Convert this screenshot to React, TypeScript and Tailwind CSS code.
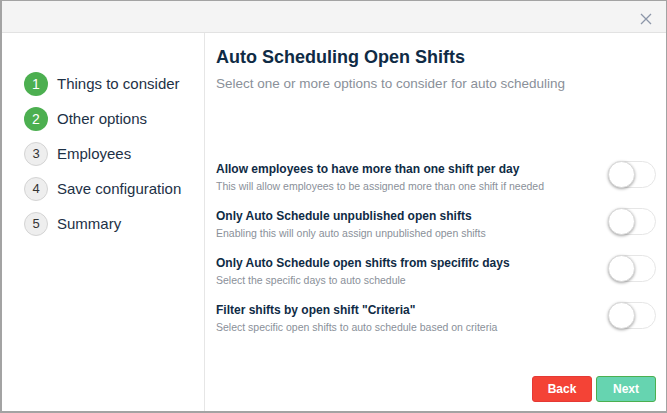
const STEPS = [
  { n: 1, label: "Things to consider", done: true },
  { n: 2, label: "Other options", done: true },
  { n: 3, label: "Employees", done: false },
  { n: 4, label: "Save configuration", done: false },
  { n: 5, label: "Summary", done: false },
];

const OPTIONS = [
  {
    title: "Allow employees to have more than one shift per day",
    desc: "This will allow employees to be assigned more than one shift if needed",
  },
  {
    title: "Only Auto Schedule unpublished open shifts",
    desc: "Enabling this will only auto assign unpublished open shifts",
  },
  {
    title: "Only Auto Schedule open shifts from specififc days",
    desc: "Select the specific days to auto schedule",
  },
  {
    title: "Filter shifts by open shift \"Criteria\"",
    desc: "Select specific open shifts to auto schedule based on criteria",
  },
];

function Toggle() {
  return (
    <div className="relative w-[48px] h-[27px] rounded-full border border-[#e6e6e6] bg-white shrink-0">
      <span className="absolute -left-px -top-px w-[27px] h-[27px] rounded-full bg-white border border-[#d9d9d9] shadow-[0_1px_3px_rgba(0,0,0,0.35)]" />
    </div>
  );
}

export default function App() {
  return (
    <div
      className="w-[667px] h-[413px] flex flex-col bg-white border border-[#a3a3a3] border-l-2 border-b-2 overflow-hidden text-[#1d3146]"
      style={{ fontFamily: '"Liberation Sans", Arial, sans-serif' }}
    >
      {/* Header */}
      <div className="h-[32px] shrink-0 bg-[#f4f4f4] border-b border-[#e2e2e2] flex items-center justify-end pr-[14px]">
        <svg width="12" height="12" viewBox="0 0 12 12" className="text-[#8c96a8] mt-[4px]">
          <path d="M1 1L11 11M11 1L1 11" stroke="currentColor" strokeWidth="1.3" />
        </svg>
      </div>

      <div className="flex flex-1 min-h-0">
        {/* Steps sidebar */}
        <div className="w-[203px] shrink-0 border-r border-[#e6e6e6] pt-[39px] pl-[22px] flex flex-col gap-[11px]">
          {STEPS.map((s) => (
            <div key={s.n} className="flex items-center h-[24px]">
              <span
                className={
                  s.done
                    ? "w-[24px] h-[24px] rounded-full bg-[#4caf50] text-white text-[14px] flex items-center justify-center"
                    : "w-[24px] h-[24px] rounded-full bg-[#eeeeee] border border-[#d4d4d4] text-[#333] text-[13px] flex items-center justify-center"
                }
              >
                {s.n}
              </span>
              <span className="ml-[9px] text-[15px] text-[#1d3146]">{s.label}</span>
            </div>
          ))}
        </div>

        {/* Content */}
        <div className="flex-1 flex flex-col pl-[11px] pr-[10px]">
          <h1 className="mt-[13px] text-[18px] font-bold text-[#0f2b45] leading-[22px]">
            Auto Scheduling Open Shifts
          </h1>
          <p className="mt-[7px] text-[13.5px] text-[#8a9099] leading-[18px]">
            Select one or more options to consider for auto scheduling
          </p>

          <div className="mt-[68px] flex flex-col gap-[13px]">
            {OPTIONS.map((o) => (
              <div key={o.title} className="flex items-start justify-between h-[34px]">
                <div>
                  <div className="text-[12px] font-bold text-[#0f2b45] leading-[16px]">{o.title}</div>
                  <div className="text-[10.5px] text-[#8a9099] leading-[14px] mt-[2px]">{o.desc}</div>
                </div>
                <Toggle />
              </div>
            ))}
          </div>

          <div className="mt-auto mb-[9px] flex justify-end gap-[4px]">
            <button className="w-[60px] h-[26px] rounded-[3px] bg-[#f44336] border border-[#e53935] text-white text-[12px] font-bold">
              Back
            </button>
            <button className="w-[60px] h-[26px] rounded-[3px] bg-[#66d4b0] border border-[#4caf50] text-white text-[12px] font-bold">
              Next
            </button>
          </div>
        </div>
      </div>
    </div>
  );
}
